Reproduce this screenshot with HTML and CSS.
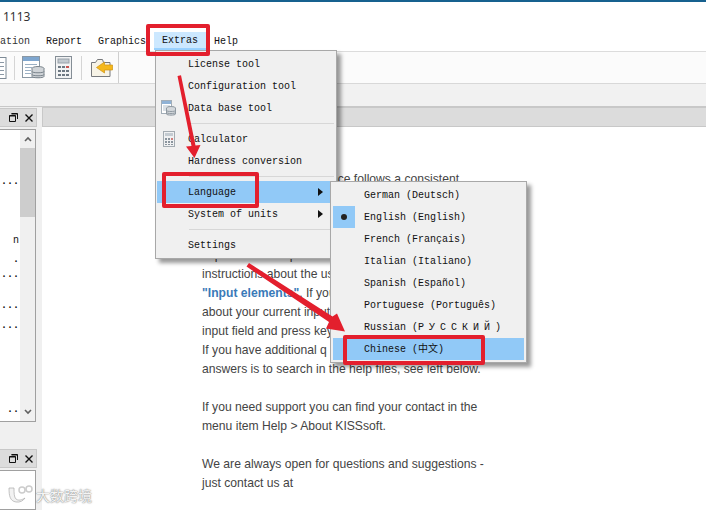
FILE: index.html
```html
<!DOCTYPE html>
<html lang="en">
<head>
<meta charset="utf-8">
<title>KISSsoft 1113</title>
<link rel="stylesheet" href="styles.css">
</head>
<body>
<div class="app">
  <div class="titlebar">1113</div>
  <div class="menubar">
    <span class="mi mi-cut">ation</span>
    <span class="mi">Report</span>
    <span class="mi">Graphics</span>
    <span class="mi mi-active">Extras</span>
    <span class="mi">Help</span>
  </div>
  <div class="toolbar-row">
    <div class="toolbar">
      <svg class="ic ic-page" width="8" height="24" viewBox="0 0 8 24"><rect x="-6" y="1.500" width="12" height="21" fill="#fff" stroke="#7d8a96"/><path d="M0 6.500h4M0 10.500h4M0 14.500h4M0 18.500h4" stroke="#8b98a5"/></svg>
      <span class="tsep tsep-1"></span>
      <svg class="ic ic-db" width="23" height="23" viewBox="0 0 23 23"><rect x=".5" y=".5" width="17" height="21" fill="#fff" stroke="#8a97a3"/><rect x="1" y="1" width="16" height="4" fill="#7ea6cf"/><path d="M3 8.500h12M3 11.500h7M3 14.500h6M3 17.500h6" stroke="#9bb0c4"/><ellipse cx="16" cy="12.500" rx="6" ry="2" fill="#d0d4d8" stroke="#7a848c"/><path d="M10 12.500v8c0 1.700 12 1.700 12 0v-8" fill="#d0d4d8" stroke="#7a848c"/><path d="M10 15.500c0 1.700 12 1.700 12 0M10 18.500c0 1.700 12 1.700 12 0" fill="none" stroke="#7a848c"/></svg>
      <svg class="ic ic-calc" width="17" height="23" viewBox="0 0 17 23"><rect x=".5" y=".5" width="16" height="22" fill="#f2f3f4" stroke="#858e96"/><rect x="3" y="3" width="11" height="4" fill="#c2c9cf" stroke="#98a1a9"/><path d="M3 10h3v2H3zM7 10h3v2H7zM3 14h3v2H3zM7 14h3v2H7zM3 18h3v2H3zM7 18h3v2H7zM11 14h3v2h-3zM11 18h3v2h-3z" fill="#6d7882"/><path d="M11 10h3v2h-3z" fill="#c9534f"/></svg>
      <span class="tsep tsep-2"></span>
      <svg class="ic ic-folder" width="22" height="20" viewBox="0 0 22 20"><path d="M.5 4.500h4l2-3h5l1 3h6.500v14h-18.500z" fill="#f7f3e6" stroke="#77797c"/><path d="M21.500 7h-8v-3l-8 5.500 8 5.500v-3h8z" fill="#f5b81c" stroke="#cf9414" stroke-width=".7"/></svg>
    </div>
  </div>
  <div class="subbar"></div>
  <div class="workspace">
    <aside class="side">
      <div class="pane-head">
        <svg class="pane-ic" width="9" height="9" viewBox="0 0 9 9"><path d="M2.500.5h6v5.500M.5 2.500h6v6h-6z" fill="none" stroke="#111"/><path d="M.5 3h6M2.500 1h6" stroke="#111"/></svg>
        <svg class="pane-ic" width="8" height="8" viewBox="0 0 8 8"><path d="M.5.5l7 7M7.500.5l-7 7" stroke="#111" stroke-width="1.400"/></svg>
      </div>
      <div class="tree">
        <div class="tree-body">
          <span class="td td1">...</span>
          <span class="td td2">n</span>
          <span class="td td3">.</span>
          <span class="td td4">...</span>
          <span class="td td5">...</span>
          <span class="td td6">...</span>
          <span class="td td7">..</span>
        </div>
        <div class="vscroll">
          <svg class="chev" width="8" height="6" viewBox="0 0 8 6"><path d="M1 5l3-3 3 3" fill="none" stroke="#606060" stroke-width="1.600"/></svg>
          <div class="thumb"></div>
          <svg class="chev chev-down" width="8" height="6" viewBox="0 0 8 6"><path d="M1 1l3 3 3-3" fill="none" stroke="#606060" stroke-width="1.600"/></svg>
        </div>
      </div>
      <div class="pane-head pane-head-2">
        <svg class="pane-ic" width="9" height="9" viewBox="0 0 9 9"><path d="M2.500.5h6v5.500M.5 2.500h6v6h-6z" fill="none" stroke="#111"/><path d="M.5 3h6M2.500 1h6" stroke="#111"/></svg>
        <svg class="pane-ic" width="8" height="8" viewBox="0 0 8 8"><path d="M.5.5l7 7M7.500.5l-7 7" stroke="#111" stroke-width="1.400"/></svg>
      </div>
      <div class="tree tree-2"></div>
    </aside>
    <main class="content">
      <div class="tabstrip"></div>
      <div class="doc">
        <p class="para">The KISSsoft user interface follows a consistent<br>
        <br>
        <br>
        <br>
        explained in chapter<br>
        instructions about the use<br>
        <b class="link">"Input elements"</b>. If you<br>
        about your current input<br>
        input field and press key<br>
        If you have additional q<br>
        answers is to search in the help files, see left below.</p>
        <p class="para">If you need support you can find your contact in the<br>
        menu item Help &gt; About KISSsoft.</p>
        <p class="para">We are always open for questions and suggestions -<br>
        just contact us at</p>
      </div>
    </main>
  </div>
</div>

<div class="menu menu-extras">
  <div class="row">License tool</div>
  <div class="row">Configuration tool</div>
  <div class="row">
    <svg class="row-ic" width="15" height="16" viewBox="0 0 15 16"><rect x=".5" y=".5" width="10" height="13" fill="#fff" stroke="#a3aeb8"/><rect x="1" y="1" width="9" height="3" fill="#8fb2d6"/><path d="M2 6h7M2 8h3M2 10h3" stroke="#b3c0cc"/><ellipse cx="10" cy="8" rx="4.500" ry="1.500" fill="#d4d8dc" stroke="#8f99a1"/><path d="M5.500 8v6c0 1.500 9 1.500 9 0V8" fill="#d4d8dc" stroke="#8f99a1"/><path d="M5.500 10.500c0 1.300 9 1.300 9 0M5.500 12.500c0 1.300 9 1.300 9 0" fill="none" stroke="#8f99a1"/></svg>
    Data base tool
  </div>
  <div class="sep"></div>
  <div class="row">
    <svg class="row-ic row-ic-calc" width="12" height="16" viewBox="0 0 12 16"><rect x=".5" y=".5" width="11" height="15" fill="#f0f1f2" stroke="#a3abb1"/><rect x="2" y="2" width="8" height="3" fill="#c4cbd1"/><path d="M2 7h2v2H2zM5 7h2v2H5zM2 10h2v2H2zM5 10h2v2H5zM2 13h2v1H2zM5 13h2v1H5zM8 10h2v2H8zM8 13h2v1H8z" fill="#8a949d"/><path d="M8 7h2v2H8z" fill="#cf7d7a"/></svg>
    Calculator
  </div>
  <div class="row">Hardness conversion</div>
  <div class="sep"></div>
  <div class="row row-hi">Language<span class="arrow"></span></div>
  <div class="row">System of units<span class="arrow"></span></div>
  <div class="sep"></div>
  <div class="row">Settings</div>
</div>

<div class="menu menu-lang">
  <div class="row">German (Deutsch)</div>
  <div class="row"><span class="check"><span class="dot"></span></span>English (English)</div>
  <div class="row">French (Français)</div>
  <div class="row">Italian (Italiano)</div>
  <div class="row">Spanish (Español)</div>
  <div class="row">Portuguese (Português)</div>
  <div class="row">Russian (<span class="wide">РУССКИЙ</span>)</div>
  <div class="row row-hi">Chinese (中文)</div>
</div>

<svg class="marks" width="706" height="510" viewBox="0 0 706 510">
  <g fill="none" stroke="#e31f2d" stroke-width="4" stroke-linejoin="round">
    <rect x="148" y="26" width="60" height="28"/>
    <rect x="164" y="174" width="93" height="32"/>
    <rect x="345" y="337" width="138" height="26"/>
  </g>
  <g fill="#e31f2d">
    <path d="M177.500 76l3.500-.8 14.500 70.300 5-.5-6 13-8.500-11.500 5.500-.6z"/>
    <path d="M246.500 266.500l2.500-3.500 83.500 53.500 4.500-3 8 18-19-3 3-6.500z"/>
  </g>
</svg>

<div class="wm">
  <svg class="wm-logo" width="28" height="20" viewBox="0 0 28 20"><path d="M2 3c0 8 1 13 7 14 4 .5 7-1 9-4-3 2-7 3-9 1-2-2-2-6-2-11z" fill="#f2f2f2" stroke="#aaa" stroke-width=".7"/><circle cx="15" cy="5" r="3" fill="none" stroke="#ccc" stroke-width="1.500"/><circle cx="22" cy="4" r="3" fill="none" stroke="#ccc" stroke-width="1.500"/></svg>
  <span class="wm-text">大数跨境</span>
</div>
</body>
</html>
```

FILE: styles.css
```css
* { box-sizing: border-box; }
html, body { margin: 0; padding: 0; }
body {
  width: 706px;
  height: 510px;
  overflow: hidden;
  position: relative;
  background: #fff;
  font-family: "Liberation Sans", Arial, sans-serif;
}
.app {
  display: flex;
  flex-direction: column;
  height: 510px;
  border-top: 2px solid #17618f;
}
.titlebar {
  height: 29px;
  padding: 8px 0 0 3px;
  font: 12px/14px "Noto Sans", sans-serif;
  color: #333;
  background: #fff;
}
.menubar {
  height: 20px;
  display: flex;
  align-items: center;
  padding-top: 2px;
  font: 10px/12px "Liberation Mono", monospace;
  background: #fff;
  color: #111;
}
.mi { padding: 0 8px; white-space: nowrap; }
.mi-cut { padding: 0 8px 0 0; color: #333; }
.mi-active {
  padding: 0 8px;
  height: 18px;
  line-height: 17px;
  width: 52px;
  margin-top: -2px;
  background: #cce8ff;
  border-bottom: 2px solid #99d1ff;
}
.toolbar-row {
  height: 33px;
  background: #fbfbfb;
  border-top: 1px solid #dcdcdc;
  border-bottom: 1px solid #d8d8d8;
}
.toolbar {
  width: 119px;
  height: 31px;
  display: flex;
  align-items: center;
  border-right: 1px solid #cfcfcf;
}
.ic { flex: none; }
.tsep { width: 1px; height: 24px; background: #d5d5d5; flex: none; }
.tsep-1 { margin-left: 6px; }
.ic-db { margin-left: 7px; }
.ic-calc { margin-left: 10px; }
.tsep-2 { margin-left: 9px; }
.ic-folder { margin-left: 9px; }
.subbar {
  height: 23px;
  background: #f1f1f1;
  border-bottom: 1px solid #c8c8c8;
}
.workspace {
  flex: 1;
  display: flex;
  min-height: 0;
  background: #f0f0f0;
}
.side {
  width: 42px;
  flex: none;
  padding-right: 5px;
  display: flex;
  flex-direction: column;
  padding-top: 1px;
}
.pane-head {
  height: 19px;
  flex: none;
  background: #dcdcdc;
  border: 1px solid #c8c8c8;
  border-left: 0;
  display: flex;
  align-items: center;
  justify-content: flex-end;
  gap: 7px;
  padding-right: 3px;
}
.pane-ic { flex: none; }
.tree {
  height: 293px;
  margin: 2px 1px 0 0;
  background: #fff;
  border: 1px solid #a0a0a0;
  border-left: 0;
  display: flex;
  flex: none;
}
.tree-body {
  width: 20px;
  flex: none;
  position: relative;
  font: bold 10px/10px "Liberation Mono", monospace;
  color: #111;
}
.td { position: absolute; right: 1px; }
.td1 { top: 47px; }
.td2 { top: 106px; font-weight: normal; }
.td3 { top: 125px; }
.td4 { top: 140px; }
.td5 { top: 171px; }
.td6 { top: 191px; }
.td7 { top: 275px; }
.vscroll {
  width: 15px;
  flex: none;
  background: #f0f0f0;
  display: flex;
  flex-direction: column;
  align-items: center;
}
.chev { margin-top: 6px; flex: none; }
.chev-down { margin: auto 0 6px; }
.thumb { width: 15px; height: 69px; margin-top: 6px; background: #cdcdcd; flex: none; }
.pane-head-2 { margin-top: 27px; }
.tree-2 { flex: 1; height: auto; margin-bottom: 0; }
.content {
  flex: 1;
  display: flex;
  flex-direction: column;
  min-width: 0;
}
.tabstrip {
  height: 20px;
  flex: none;
  background: #dcdcdc;
  border: 1px solid #c8c8c8;
  border-right: 0;
}
.doc {
  flex: 1;
  background: #fff;
  padding: 43px 0 0 160px;
  font: 12.15px/19px "Liberation Sans", Arial, sans-serif;
  color: #444;
  white-space: nowrap;
  overflow: hidden;
}
.para { margin: 0 0 19px; }
.link { color: #3a7ab8; }

.menu {
  position: absolute;
  background: #f0f0f0;
  border: 1px solid #a8a8a8;
  box-shadow: 4px 4px 4px rgba(0,0,0,.4);
  font: 10px/24px "Liberation Mono", "Noto Sans CJK SC", monospace;
  color: #111;
  white-space: nowrap;
}
.menu-extras {
  left: 155px;
  top: 50px;
  width: 182px;
  height: 209px;
  padding: 2px 1px;
}
.menu-lang {
  left: 330px;
  top: 181px;
  width: 197px;
  height: 182px;
  padding: 2px;
}
.row {
  position: relative;
  height: 22px;
  padding-left: 31px;
}
.row-hi { background: #91c9f7; }
.row-ic { position: absolute; left: 4px; top: 3px; }
.row-ic-calc { left: 6px; }
.arrow {
  position: absolute;
  right: 12px;
  top: 7px;
  border-left: 5px solid #111;
  border-top: 4px solid transparent;
  border-bottom: 4px solid transparent;
}
.sep { height: 1px; background: #d7d7d7; margin: 4px 1px 4px 32px; }
.check {
  position: absolute;
  left: 0;
  top: 0;
  width: 22px;
  height: 22px;
  background: #91c9f7;
  display: flex;
  align-items: center;
  justify-content: center;
}
.dot { width: 6px; height: 6px; border-radius: 50%; background: #222; }
.wide { letter-spacing: 5px; }

.marks { position: absolute; left: 0; top: 0; pointer-events: none; }
.wm {
  position: absolute;
  left: 7px;
  top: 485px;
  display: flex;
  align-items: center;
  gap: 1px;
}
.wm-text {
  font: 14px/20px "Noto Sans CJK SC", sans-serif;
  color: #f4f4f4;
  text-shadow: 0 0 1px #777, 0 0 2px #aaa;
}
```
